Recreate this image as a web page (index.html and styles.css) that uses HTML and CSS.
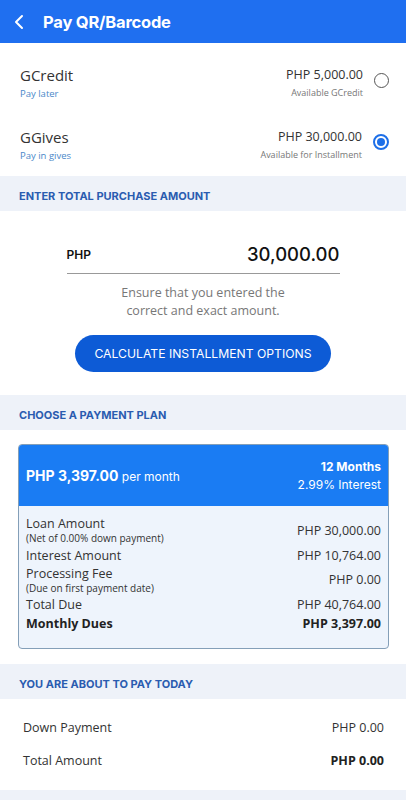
FILE: index.html
```html
<!DOCTYPE html>
<html lang="en">
<head>
  <meta charset="UTF-8">
  <title>Pay QR/Barcode</title>
  <meta name="viewport" content="width=device-width, initial-scale=1">
  <link rel="stylesheet" href="styles.css">
</head>
<body>
  <div class="topbar">
    <svg class="back" width="10" height="16" viewBox="0 0 10 16"><path d="M8 2 L2 8 L8 14" fill="none" stroke="#fff" stroke-width="2" stroke-linecap="round" stroke-linejoin="round"/></svg>
    <h1>Pay QR/Barcode</h1>
  </div>

  <div class="sources">
    <div class="source">
      <div class="src-left">
        <div class="src-name">GCredit</div>
        <div class="src-sub">Pay later</div>
      </div>
      <div class="src-right">
        <div class="src-amt">PHP 5,000.00</div>
        <div class="src-note">Available GCredit</div>
      </div>
      <span class="radio"></span>
    </div>
    <div class="source">
      <div class="src-left">
        <div class="src-name">GGives</div>
        <div class="src-sub">Pay in gives</div>
      </div>
      <div class="src-right">
        <div class="src-amt">PHP 30,000.00</div>
        <div class="src-note">Available for Installment</div>
      </div>
      <span class="radio checked"></span>
    </div>
  </div>

  <div class="section-title">ENTER TOTAL PURCHASE AMOUNT</div>
  <div class="purchase">
    <div class="amount-field">
      <span class="cur">PHP</span>
      <span class="amount">30,000.00</span>
    </div>
    <p class="hint">Ensure that you entered the<br>correct and exact amount.</p>
    <button class="calc">CALCULATE INSTALLMENT OPTIONS</button>
  </div>

  <div class="section-title">CHOOSE A PAYMENT PLAN</div>
  <div class="plans">
    <div class="plan">
      <div class="plan-head">
        <div class="monthly"><b>PHP 3,397.00</b> per month</div>
        <div class="term">
          <b>12 Months</b>
          <span>2.99% Interest</span>
        </div>
      </div>
      <div class="plan-body">
        <div class="row">
          <div>Loan Amount<small>(Net of 0.00% down payment)</small></div>
          <div>PHP 30,000.00</div>
        </div>
        <div class="row">
          <div>Interest Amount</div>
          <div>PHP 10,764.00</div>
        </div>
        <div class="row">
          <div>Processing Fee<small>(Due on first payment date)</small></div>
          <div>PHP 0.00</div>
        </div>
        <div class="row">
          <div>Total Due</div>
          <div>PHP 40,764.00</div>
        </div>
        <div class="row strong">
          <div>Monthly Dues</div>
          <div>PHP 3,397.00</div>
        </div>
      </div>
    </div>
  </div>

  <div class="section-title">YOU ARE ABOUT TO PAY TODAY</div>
  <div class="today">
    <div class="row">
      <div>Down Payment</div>
      <div>PHP 0.00</div>
    </div>
    <div class="row">
      <div>Total Amount</div>
      <div class="bold">PHP 0.00</div>
    </div>
  </div>
  <div class="footer-strip"></div>
</body>
</html>
```

FILE: styles.css
```css
body, html {
  margin: 0;
  padding: 0;
  background: #fff;
  font-family: "Open Sans", "Noto Sans", sans-serif;
  color: #333;
}

.topbar {
  height: 43px;
  background-color: #1f6ff0;
  display: flex;
  align-items: center;
  padding-left: 14px;
}

.topbar .back {
  margin-right: 19px;
}

.topbar h1 {
  margin: 0;
  color: #fff;
  font-family: Inter, sans-serif;
  font-size: 16.5px;
  font-weight: 700;
  letter-spacing: -0.2px;
}

.sources {
  padding: 14px 17px 7px 20px;
}

.source {
  display: flex;
  align-items: center;
  height: 50px;
  margin-bottom: 12px;
}

.source:last-child {
  margin-bottom: 0;
}

.src-left {
  flex: 1;
}

.src-name {
  font-size: 15px;
  color: #333;
  line-height: 20px;
}

.src-sub {
  font-size: 9.5px;
  color: #4a88c9;
  margin-top: 2px;
}

.src-right {
  text-align: right;
  margin-right: 11px;
}

.src-amt {
  font-size: 12.5px;
  color: #333;
  line-height: 18px;
}

.src-note {
  font-size: 9px;
  color: #777;
  margin-top: 2px;
}

.radio {
  width: 13px;
  height: 13px;
  border: 1.5px solid #555;
  border-radius: 50%;
  margin-top: -4px;
  box-sizing: content-box;
}

.radio.checked {
  border: 2px solid #1d6fe8;
  width: 12px;
  height: 12px;
  position: relative;
}

.radio.checked::after {
  content: "";
  position: absolute;
  left: 2px;
  top: 2px;
  width: 8px;
  height: 8px;
  border-radius: 50%;
  background: #1d6fe8;
}

.section-title {
  background-color: #eef2f9;
  color: #2a5cb0;
  font-family: Inter, sans-serif;
  font-size: 11px;
  font-weight: 700;
  height: 30px;
  line-height: 30px;
  padding: 5px 0 0 19px;
}

.purchase {
  padding: 32px 0 23px;
  display: flex;
  flex-direction: column;
  align-items: center;
}

.amount-field {
  width: 273px;
  display: flex;
  justify-content: space-between;
  align-items: center;
  border-bottom: 1.5px solid #999;
  padding-bottom: 8px;
}

.cur {
  font-family: Inter, sans-serif;
  font-size: 12px;
  font-weight: 600;
  color: #111;
}

.amount {
  font-family: Inter, sans-serif;
  font-size: 18.5px;
  font-weight: 500;
  color: #111;
}

.hint {
  margin: 10px 0 15px;
  text-align: center;
  font-size: 12.5px;
  line-height: 18px;
  color: #777;
}

.calc {
  width: 256px;
  height: 37px;
  border: none;
  border-radius: 19px;
  background-color: #0d5bd6;
  color: #fff;
  font-family: Inter, sans-serif;
  font-size: 12.2px;
  cursor: pointer;
}

.plans {
  padding: 14px 17px 15px 18px;
}

.plan {
  border: 1px solid #849fb8;
  border-radius: 4px;
  overflow: hidden;
  background-color: #eef4fc;
}

.plan-head {
  background-color: #1a7cf3;
  color: #fff;
  height: 61px;
  display: flex;
  justify-content: space-between;
  align-items: center;
  padding: 0 7px;
  font-family: Inter, sans-serif;
}

.monthly {
  font-size: 12px;
}

.monthly b {
  font-size: 14px;
}

.term {
  text-align: right;
  font-size: 12px;
  line-height: 18px;
}

.term b {
  display: block;
  font-size: 12px;
}

.plan-body {
  padding: 10px 7px 14px;
}

.row {
  display: flex;
  justify-content: space-between;
  align-items: center;
  font-size: 12.5px;
  line-height: 16px;
  color: #333;
  margin-bottom: 2px;
}

.row small {
  display: block;
  font-size: 10px;
  line-height: 13.6px;
}

.row.strong {
  margin-top: 3px;
}

.row.strong,
.row .bold {
  font-weight: 700;
  color: #222;
}

.today {
  padding: 14px 22px 11px 23px;
}

.today .row {
  height: 30px;
  margin-bottom: 3px;
  font-size: 12.5px;
}

.footer-strip {
  height: 10px;
  background-color: #eef2f9;
}
```
